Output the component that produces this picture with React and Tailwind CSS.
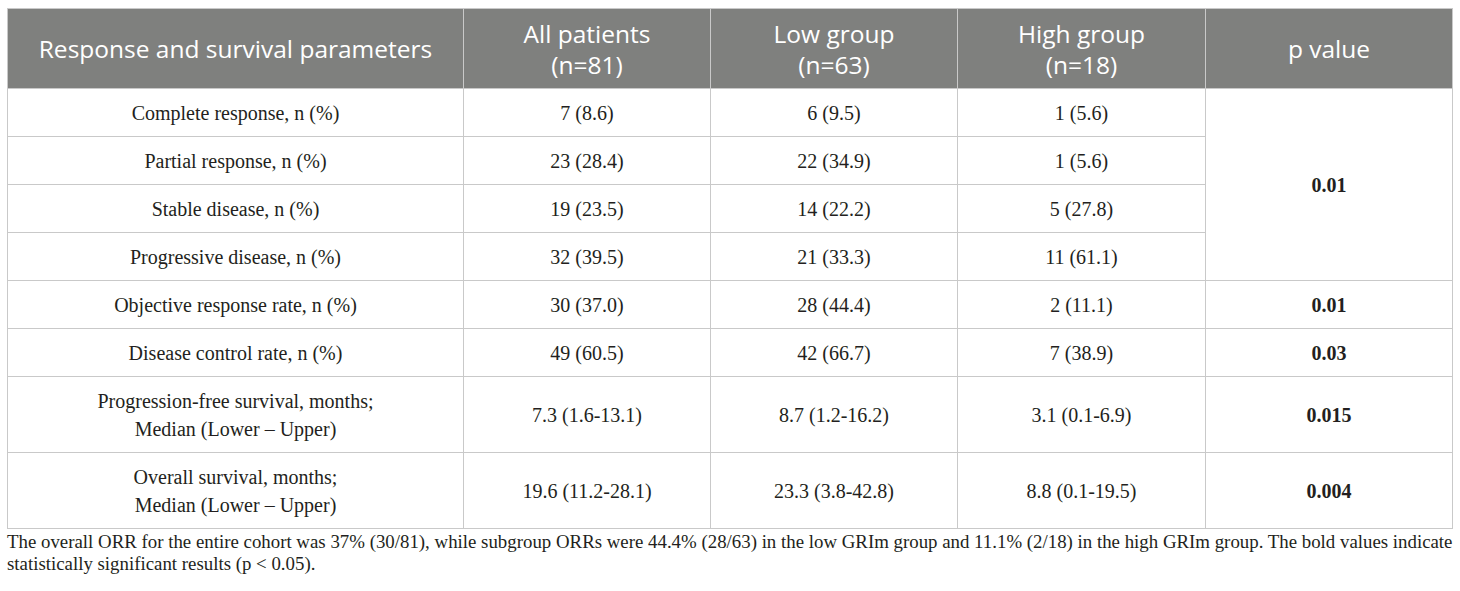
import React from "react";

const rows = [
    { label: ["Complete response, n (%)"], all: "7 (8.6)", low: "6 (9.5)", high: "1 (5.6)" },
    { label: ["Partial response, n (%)"], all: "23 (28.4)", low: "22 (34.9)", high: "1 (5.6)" },
    { label: ["Stable disease, n (%)"], all: "19 (23.5)", low: "14 (22.2)", high: "5 (27.8)" },
    { label: ["Progressive disease, n (%)"], all: "32 (39.5)", low: "21 (33.3)", high: "11 (61.1)" },
    { label: ["Objective response rate, n (%)"], all: "30 (37.0)", low: "28 (44.4)", high: "2 (11.1)", p: "0.01" },
    { label: ["Disease control rate, n (%)"], all: "49 (60.5)", low: "42 (66.7)", high: "7 (38.9)", p: "0.03" },
    {
        label: ["Progression-free survival, months;", "Median (Lower \u2013 Upper)"],
        all: "7.3 (1.6-13.1)",
        low: "8.7 (1.2-16.2)",
        high: "3.1 (0.1-6.9)",
        p: "0.015",
    },
    {
        label: ["Overall survival, months;", "Median (Lower \u2013 Upper)"],
        all: "19.6 (11.2-28.1)",
        low: "23.3 (3.8-42.8)",
        high: "8.8 (0.1-19.5)",
        p: "0.004",
    },
];

const serif = { fontFamily: '"Liberation Serif", "Times New Roman", serif' };

const App = () => {
    const th = "border border-[#c9c9c9] text-white font-normal text-center align-middle";
    const td = "border border-[#c9c9c9] text-center align-middle";

    return (
        <div className="w-[1460px] h-[591px] bg-white pt-[8px] pl-[7px] pr-[8px]">
            <table
                className="w-[1445px] table-fixed border-collapse text-[#231f20]"
                style={serif}
            >
                <colgroup>
                    <col className="w-[456px]" />
                    <col className="w-[247px]" />
                    <col className="w-[247px]" />
                    <col className="w-[248px]" />
                    <col className="w-[247px]" />
                </colgroup>
                <thead>
                    <tr
                        className="h-[80px] bg-[#7f807e] text-[24.5px] leading-[31px]"
                        style={{ fontFamily: '"Open Sans", "Noto Sans", sans-serif' }}
                    >
                        <th className={th}>Response and survival parameters</th>
                        <th className={th}>
                            All patients
                            <br />
                            (n=81)
                        </th>
                        <th className={th}>
                            Low group
                            <br />
                            (n=63)
                        </th>
                        <th className={th}>
                            High group
                            <br />
                            (n=18)
                        </th>
                        <th className={th}>p value</th>
                    </tr>
                </thead>
                <tbody className="text-[20px] leading-[28px]">
                    {rows.map((r, i) => (
                        <tr key={i} className={r.label.length > 1 ? "h-[76px]" : "h-[48px]"}>
                            <td className={td}>
                                {r.label.map((l, j) => (
                                    <div key={j}>{l}</div>
                                ))}
                            </td>
                            <td className={td}>{r.all}</td>
                            <td className={td}>{r.low}</td>
                            <td className={td}>{r.high}</td>
                            {i === 0 && (
                                <td rowSpan={4} className={td + " font-bold"}>
                                    0.01
                                </td>
                            )}
                            {r.p && <td className={td + " font-bold"}>{r.p}</td>}
                        </tr>
                    ))}
                </tbody>
            </table>
            <p
                className="mt-[2px] whitespace-nowrap text-[18.85px] leading-[22px] text-[#231f20]"
                style={serif}
            >
                The overall ORR for the entire cohort was 37% (30/81), while subgroup ORRs were 44.4% (28/63) in the
                low GRIm group and 11.1% (2/18) in the high GRIm group. The bold values indicate
                <br />
                statistically significant results (p &lt; 0.05).
            </p>
        </div>
    );
};

export default App;
